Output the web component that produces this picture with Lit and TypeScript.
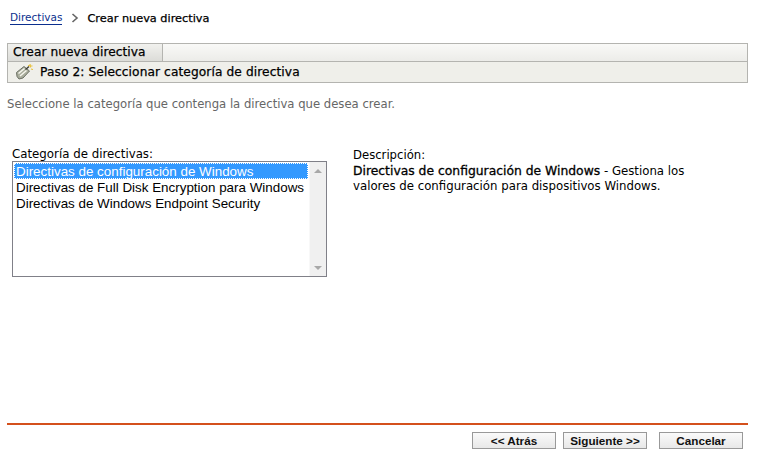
import { LitElement, html, css } from "lit";
import { customElement } from "lit/decorators.js";

@customElement("app-root")
export class AppRoot extends LitElement {
  static styles = css`
    :host {
      display: block;
      width: 764px;
      height: 474px;
      background: #fff;
      font-family: "DejaVu Sans", Tahoma, sans-serif;
      font-size: 11.6px;
      color: #000;
      overflow: hidden;
    }
    .page { display: flex; flex-direction: column; height: 474px; padding: 0 16px 0 7px; box-sizing: border-box; }
    .crumbs { display: flex; align-items: center; height: 16px; margin: 10px 0 17px 3px; font-size: 10.5px; }
    .crumbs a { color: #0b2f8e; border-bottom: 1px solid #0b2f8e; line-height: 13px; }
    .current { font-size: 11.3px; -webkit-text-stroke: 0.25px #000; }
    .sep { margin: 0 8px 0 9px; display: flex; }
    .panel { border: 1px solid #b4b4b0; height: 40px; box-sizing: border-box; display: flex; flex-direction: column; }
    .tabs { height: 18px; box-sizing: border-box; border-bottom: 1px solid #b4b4b0; background: linear-gradient(#f9f9f7, #ecece9); display: flex; }
    .tab { width: 155px; box-sizing: border-box; border-right: 1px solid #b4b4b0; padding-left: 5px; line-height: 17px; background: linear-gradient(#f1f1ee, #dcdcd8); font-size: 12.2px; letter-spacing: 0.05px; -webkit-text-stroke: 0.25px #000; white-space: nowrap; }
    .step { flex: 1; background: #efefea; display: flex; align-items: center; padding-left: 8px; gap: 7px; font-size: 12.2px; letter-spacing: 0.1px; -webkit-text-stroke: 0.25px #000; white-space: nowrap; }
    .intro { margin: 14px 0 0; color: #666; line-height: 14px; font-size: 11.65px; }
    .main { display: flex; margin: 36px 0 0 5px; }
    .left { width: 315px; }
    .label { line-height: 14px; height: 14px; font-size: 11.8px; white-space: nowrap; }
    .list { margin-top: 0; width: 315px; height: 116px; box-sizing: border-box; border: 1px solid #808088; display: flex; font: 13.4px/16px "Liberation Sans", Arial, sans-serif; }
    .items { flex: 1; padding: 1px 0 0 1px; }
    .item { height: 16px; padding-left: 2px; white-space: nowrap; margin-right: 1px; line-height: 17px; }
    .item.sel { background: #3399ff; color: #fff; outline: 1px dotted #fff; outline-offset: -1px; }
    .scroll { width: 17px; background: #f0f0f0; border-left: 1px solid #f8f8f8; display: flex; flex-direction: column; justify-content: space-between; align-items: center; padding: 7px 0 6px; box-sizing: border-box; }
    .desc { margin: 1px 0 0 26px; width: 345px; line-height: 14.5px; font-size: 11.75px; }
    .desc-title { height: 16px; font-size: 11.65px; }
    .desc b { font-weight: 400; font-size: 12.35px; -webkit-text-stroke: 0.3px #000; }
    .spacer { flex: 1; }
    .footer { border-top: 2px solid #d4501c; height: 51px; box-sizing: border-box; display: flex; justify-content: flex-end; padding: 7px 5px 0 0; }
    .btn { width: 84px; height: 17px; box-sizing: border-box; border: 1px solid #999; background: linear-gradient(#fafafa, #e8e8e8); display: flex; align-items: center; justify-content: center; font: 700 11.7px "Liberation Sans", Arial, sans-serif; color: #111; margin-left: 7px; }
    .btn.gap { margin-left: 12px; }
  `;

  render() {
    return html`<div class="page">
      <div class="crumbs">
        <a>Directivas</a>
        <span class="sep"><svg width="8" height="10" viewBox="0 0 8 10"><path d="M1.5 1 L6 5 L1.5 9" fill="none" stroke="#666" stroke-width="1.6"/></svg></span>
        <span class="current">Crear nueva directiva</span>
      </div>
      <div class="panel">
        <div class="tabs"><div class="tab">Crear nueva directiva</div></div>
        <div class="step">
          <svg width="17" height="16" viewBox="0 0 17 16">
            <path d="M0.5 8.5 L8 2.5 L13.5 7 L7 14 L3 15 L1 12.5 Z" fill="#a9ad9c" stroke="#6c7064" stroke-width="1"/>
            <path d="M2.5 9.5 L8.5 4.5 M4 12 L10.5 6.5" stroke="#f6f6ee" stroke-width="1.5"/>
            <path d="M9.5 5.5 L13 2.5" stroke="#3c3c34" stroke-width="1.4"/>
            <path d="M14 0 L14.5 3.5 M12 1.5 L16.5 2 M15 5 L17 5.5" stroke="#e8c23c" stroke-width="1.2"/>
          </svg>
          <span>Paso 2: Seleccionar categoría de directiva</span>
        </div>
      </div>
      <p class="intro">Seleccione la categoría que contenga la directiva que desea crear.</p>
      <div class="main">
        <div class="left">
          <div class="label">Categoría de directivas:</div>
          <div class="list">
            <div class="items">
              <div class="item sel">Directivas de configuración de Windows</div>
              <div class="item">Directivas de Full Disk Encryption para Windows</div>
              <div class="item">Directivas de Windows Endpoint Security</div>
            </div>
            <div class="scroll">
              <svg width="8" height="4" viewBox="0 0 8 4"><path d="M0 4 L4 0 L8 4 Z" fill="#a8a8a8"/></svg>
              <svg width="8" height="4" viewBox="0 0 8 4"><path d="M0 0 L4 4 L8 0 Z" fill="#a8a8a8"/></svg>
            </div>
          </div>
        </div>
        <div class="desc">
          <div class="desc-title">Descripción:</div>
          <div><b>Directivas de configuración de Windows</b> - Gestiona los valores de configuración para dispositivos Windows.</div>
        </div>
      </div>
      <div class="spacer"></div>
      <div class="footer">
        <div class="btn">&lt;&lt; Atrás</div>
        <div class="btn">Siguiente &gt;&gt;</div>
        <div class="btn gap">Cancelar</div>
      </div>
    </div>`;
  }
}
